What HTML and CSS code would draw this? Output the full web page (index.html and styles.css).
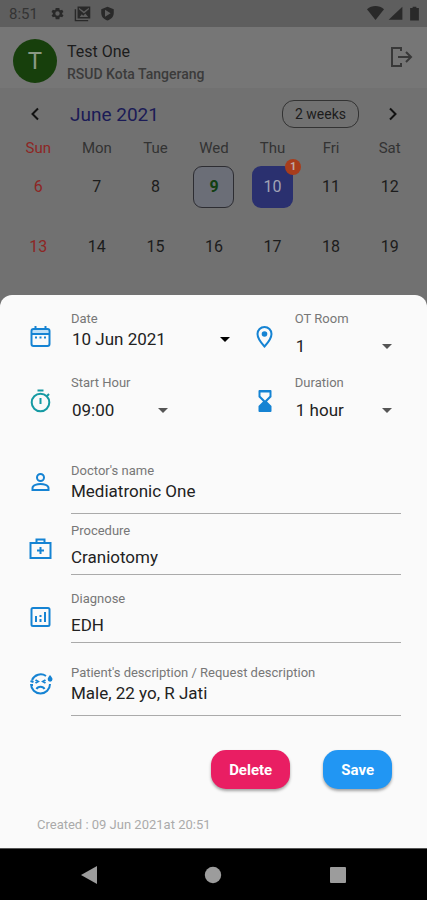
FILE: index.html
```html
<!DOCTYPE html>
<html lang="en">
<head>
	<meta charset="UTF-8">
	<meta name="viewport" content="width=device-width, initial-scale=1">
	<title>OT Schedule</title>
	<link rel="stylesheet" href="styles.css">
</head>
<body>
	<div class="status">
		<span class="clock">8:51</span>
		<svg class="status-icon" viewBox="0 0 24 24"><path fill-rule="evenodd" d="M19.4 13a7.5 7.5 0 0 0 0-2l2.1-1.6-2-3.5-2.5 1a7.5 7.5 0 0 0-1.700-1L15 3H9l-.4 2.900a7.5 7.5 0 0 0-1.700 1l-2.5-1-2 3.5L4.600 11a7.5 7.5 0 0 0 0 2l-2.1 1.6 2 3.5 2.5-1a7.5 7.5 0 0 0 1.700 1L9 21h6l.4-2.900a7.5 7.5 0 0 0 1.700-1l2.5 1 2-3.5zM12 15.5a3.5 3.5 0 1 1 0-7 3.5 3.5 0 0 1 0 7z"/></svg>
		<svg class="status-icon wide" viewBox="0 0 24 24"><path fill-rule="evenodd" d="M1 6h2v15h17v2H1zM5 2h18v17H5zM7 4v2l7 6 7-6V4l-7 5zM8 17h12l-4-5-3 3-2-2z"/></svg>
		<svg class="status-icon" viewBox="0 0 24 24"><path fill-rule="evenodd" d="M12 1l10 4v6c0 6-4 10-10 12C6 21 2 17 2 11V5zM8 6v11l9-5.5z"/></svg>
		<span class="spacer"></span>
		<svg class="status-icon wide" viewBox="0 0 24 24"><path d="M0 6c7-6 17-6 24 0L12 21z"/></svg>
		<svg class="status-icon" viewBox="0 0 24 24"><path d="M1 22L23 1v21z"/></svg>
		<svg class="status-icon" viewBox="0 0 24 24"><path d="M9 1h6v2h4v20H5V3h4z"/></svg>
	</div>
	<header class="profile">
		<div class="avatar">T</div>
		<div class="who">
			<div class="name">Test One</div>
			<div class="hospital">RSUD Kota Tangerang</div>
		</div>
		<button class="icon-btn" type="button" aria-label="Log out">
			<svg width="24" height="24" viewBox="0 0 24 24" class="line"><path d="M12 6V3H3v18h9v-3M9 12h13M17 7l5 5-5 5"/></svg>
		</button>
	</header>
	<section class="calendar">
		<div class="month-bar">
			<button class="icon-btn" type="button" aria-label="Previous">
				<svg width="24" height="24" viewBox="0 0 24 24" class="line"><path d="M15 6.5L9.5 12l5.5 5.5"/></svg>
			</button>
			<h1 class="month">June 2021</h1>
			<button class="range" type="button">2 weeks</button>
			<button class="icon-btn" type="button" aria-label="Next">
				<svg width="24" height="24" viewBox="0 0 24 24" class="line"><path d="M9 6.5l5.5 5.5L9 17.5"/></svg>
			</button>
		</div>
		<table class="days">
			<thead>
				<tr><th class="sunday">Sun</th><th>Mon</th><th>Tue</th><th>Wed</th><th>Thu</th><th>Fri</th><th>Sat</th></tr>
			</thead>
			<tbody>
				<tr>
					<td class="sunday">6</td><td>7</td><td>8</td>
					<td><span class="day today">9</span></td>
					<td><span class="day selected">10<span class="badge">1</span></span></td>
					<td>11</td><td>12</td>
				</tr>
				<tr><td class="sunday">13</td><td>14</td><td>15</td><td>16</td><td>17</td><td>18</td><td>19</td></tr>
			</tbody>
		</table>
	</section>
	<form class="sheet">
		<div class="pair">
			<div class="field">
				<svg class="icon" viewBox="0 0 24 24"><path fill="#bfe0f8" d="M4 4h16v5H4z"/><path class="stroke" d="M5 4h14q2 0 2 2v13q0 2-2 2H5q-2 0-2-2V6q0-2 2-2zM3 9h18M7 1v4M17 1v4"/><path d="M6.500 11.500h2v2h-2zM11 11.500h2v2h-2zM15.500 11.500h2v2h-2z"/></svg>
				<div class="control tight">
					<label for="date">Date</label>
					<div class="drop dark long"><select id="date"><option>10 Jun 2021</option></select></div>
				</div>
			</div>
			<div class="field">
				<svg class="icon" viewBox="0 0 24 24"><path class="stroke" d="M12 2a7 7 0 0 0-7 7c0 5 7 12.5 7 12.5S19 14 19 9a7 7 0 0 0-7-7z"/><circle cx="12" cy="9" r="2.8"/></svg>
				<div class="control">
					<label for="room">OT Room</label>
					<div class="drop"><select id="room"><option>1</option></select></div>
				</div>
			</div>
		</div>
		<div class="pair">
			<div class="field">
				<svg class="icon teal" viewBox="0 0 24 24"><circle class="stroke" cx="12" cy="13.5" r="8.8"/><path class="stroke" d="M9 1.5h6M12 9v6M18.5 7l2-2"/></svg>
				<div class="control">
					<label for="start">Start Hour</label>
					<div class="drop"><select id="start"><option>09:00</option></select></div>
				</div>
			</div>
			<div class="field">
				<svg class="icon" viewBox="0 0 24 24"><path fill-rule="evenodd" d="M7 1h11q1 0 1 1v6l-4.5 4.5L19 17v5q0 1-1 1H7q-1 0-1-1v-5l4.5-4.5L6 8V2q0-1 1-1zM8 3.5V7l4.5 4.5L17 7V3.5z"/></svg>
				<div class="control">
					<label for="duration">Duration</label>
					<div class="drop"><select id="duration"><option>1 hour</option></select></div>
				</div>
			</div>
		</div>
		<div class="field text doctor">
			<svg class="icon high" viewBox="0 0 24 24"><circle class="stroke" cx="12" cy="7.5" r="3.5"/><path class="stroke" d="M4 20v-2c0-3 5-4 8-4s8 1 8 4v2z"/></svg>
			<div class="control tight">
				<label for="doctor">Doctor's name</label>
				<input id="doctor" type="text" value="Mediatronic One">
			</div>
		</div>
		<div class="field text procedure">
			<svg class="icon" viewBox="0 0 24 24"><path class="stroke" d="M2 6h20v15H2zM8 6V2.5h8V6M12 10v7M8.5 13.5h7"/></svg>
			<div class="control">
				<label for="procedure">Procedure</label>
				<input id="procedure" type="text" value="Craniotomy">
			</div>
		</div>
		<div class="field text diagnose">
			<svg class="icon" viewBox="0 0 24 24"><rect class="stroke" x="3" y="3" width="18" height="18" rx="1.5"/><path d="M6.5 11h2v6h-2zM11 10h2v2h-2zM11 14h2v3h-2zM15.5 7h2v10h-2z"/></svg>
			<div class="control">
				<label for="diagnose">Diagnose</label>
				<input id="diagnose" type="text" value="EDH">
			</div>
		</div>
		<div class="field text patient">
			<svg class="icon high" viewBox="0 0 24 24"><path class="stroke" d="M17.5 4A9.5 9.5 0 0 0 3.5 8M2.5 12a9.5 9.5 0 0 0 19 0M2.5 13h2M2 9l3 1M8 17c1.5-3 6.5-3 8 0M7 8l2.5 1.5L7 11M17 8l-2.5 1.5L17 11"/><path d="M21.5 3c1.5 2 2.5 3 2.5 4.3a2.4 2.4 0 0 1-4.8 0C19.2 6 20 5 21.5 3z"/></svg>
			<div class="control tight">
				<label for="patient">Patient's description / Request description</label>
				<input id="patient" type="text" value="Male, 22 yo, R Jati">
			</div>
		</div>
		<div class="actions">
			<button class="btn delete" type="button">Delete</button>
			<button class="btn save" type="button">Save</button>
		</div>
		<p class="created">Created : 09 Jun 2021at 20:51</p>
	</form>
	<nav class="system-nav">
		<button type="button" aria-label="Back"><svg width="18" height="18" viewBox="0 0 18 18"><path d="M1 9L17 0v18z"/></svg></button>
		<button type="button" aria-label="Home"><svg width="18" height="18" viewBox="0 0 18 18"><circle cx="9" cy="9" r="8.2"/></svg></button>
		<button type="button" aria-label="Recent apps"><svg width="18" height="18" viewBox="0 0 18 18"><rect x="1" y="1" width="16" height="16" rx="1"/></svg></button>
	</nav>
</body>
</html>
```

FILE: styles.css
```css
* {
	box-sizing: border-box;
}
body {
	margin: 0;
	min-height: 100vh;
	display: flex;
	flex-direction: column;
	background-color: #717171;
	font-family: Roboto, "Liberation Sans", sans-serif;
	color: #1c1c1c;
}
button {
	padding: 0;
	border: 0;
	background: none;
	font-family: inherit;
	color: inherit;
}
svg {
	display: block;
}

/* status bar */
.status {
	height: 27px;
	padding: 0 5px 0 9px;
	display: flex;
	align-items: center;
	gap: 4px;
	background-color: #5e5e5e;
	color: #343434;
}
.clock {
	margin-right: 8px;
	font-size: 15px;
}
.status-icon {
	width: 15px;
	height: 15px;
	margin-right: 5px;
	fill: #292929;
}
.status-icon.wide {
	width: 17px;
	height: 17px;
}
.spacer {
	flex: 1;
}
.spacer ~ .status-icon {
	margin-right: 0;
}

/* profile */
.profile {
	height: 61px;
	padding: 12px 14px 5px 13px;
	display: flex;
	align-items: center;
	background-color: #767676;
}
.avatar {
	width: 44px;
	height: 44px;
	border-radius: 50%;
	background-color: #173f0c;
	color: #8b9985;
	font-size: 24px;
	line-height: 44px;
	text-align: center;
}
.who {
	flex: 1;
	margin: 3px 0 0 10px;
}
.name {
	font-size: 16px;
	line-height: 22px;
}
.hospital {
	font-size: 14px;
	line-height: 22px;
	font-weight: 500;
	color: #3b3b3b;
}
.line {
	fill: none;
	stroke: currentColor;
	stroke-width: 2;
}
.profile .icon-btn {
	margin-bottom: 8px;
	color: #383838;
}

/* calendar */
.calendar {
	padding: 10px 8px 27px 9px;
}
.month-bar {
	height: 32px;
	margin-bottom: 4px;
	padding: 0 14px;
	display: flex;
	align-items: center;
}
.month-bar .icon-btn {
	color: #111;
}
.month {
	flex: 1;
	margin: 0 0 0 23px;
	font-size: 19px;
	font-weight: 400;
	color: #1b1b56;
}
.range {
	width: 77px;
	height: 28px;
	margin-right: 22px;
	border: 1px solid #333;
	border-radius: 12px;
	font-size: 14px;
}
.days {
	width: 100%;
	table-layout: fixed;
	border-collapse: collapse;
	text-align: center;
	font-size: 16px;
}
.days th {
	height: 27px;
	padding: 0;
	font-size: 15px;
	font-weight: 400;
	color: #333;
}
.days td {
	height: 44px;
	padding: 0;
}
.days tbody tr:first-child td {
	height: 63px;
	padding-bottom: 12px;
}
.days .sunday {
	color: #8d2624;
}
.day {
	position: relative;
	display: block;
	width: 41px;
	height: 42px;
	margin: 0 auto;
	border-radius: 9px;
	line-height: 42px;
}
.today {
	border: 1px solid #2d2d32;
	background-color: #6b6e77;
	color: #123f12;
	font-weight: 700;
	line-height: 40px;
}
.selected {
	background-color: #2a306f;
	color: #a1a3b5;
}
.badge {
	position: absolute;
	top: -7px;
	right: -8px;
	width: 16px;
	height: 16px;
	border-radius: 50%;
	background-color: #a83d1c;
	color: #c0aaa4;
	font-size: 11px;
	font-weight: 700;
	line-height: 16px;
}

/* bottom sheet */
.sheet {
	flex: 1;
	padding: 16px 26px 12px 28px;
	border-radius: 12px 12px 0 0;
	background-color: #fafafa;
}
.pair {
	display: grid;
	grid-template-columns: 3fr 2fr;
	margin-bottom: 18px;
}
.field {
	display: grid;
	grid-template-columns: 25px 1fr;
	column-gap: 18px;
}
.icon {
	width: 25px;
	height: 24px;
	margin-top: 14px;
	fill: #1583d3;
	stroke: none;
	color: #1583d3;
}
.icon.high {
	margin-top: 7px;
}
.icon.teal {
	color: #159aa3;
}
.stroke {
	fill: none;
	stroke: currentColor;
	stroke-width: 2;
}
.control {
	display: flex;
	flex-direction: column;
	gap: 8px;
}
.control.tight {
	gap: 1px;
}
label {
	font-size: 13px;
	line-height: 16px;
	color: #777;
}
.drop {
	position: relative;
	width: 98px;
}
.drop.long {
	width: 160px;
}
/* caret */
.drop::after {
	content: "";
	position: absolute;
	top: 9px;
	right: 1px;
	border: 5px solid transparent;
	border-top-color: #555;
	border-bottom: 0;
	pointer-events: none;
}
.drop.dark::after {
	border-top-color: #000;
}
select,
input {
	display: block;
	width: 100%;
	height: 22px;
	margin: 0;
	padding: 0;
	border: 0;
	border-radius: 0;
	background: none;
	appearance: none;
	outline: 0;
	font-family: inherit;
	font-size: 17px;
	line-height: 22px;
	color: #222;
}
select {
	padding-left: 1px;
}
.text input {
	height: 29px;
	padding-bottom: 6px;
	border-bottom: 1px solid #aaa;
}
.text .tight input {
	height: 34px;
	padding-bottom: 11px;
}
.doctor {
	margin-top: 42px;
}
.procedure {
	margin-top: 9px;
}
.procedure .control,
.diagnose .control {
	gap: 7px;
}
.diagnose {
	margin-top: 16px;
}
.patient {
	margin-top: 22px;
}
.actions {
	display: flex;
	justify-content: flex-end;
	gap: 33px;
	margin: 34px 9px 0 0;
}
.btn {
	height: 39px;
	padding: 0 18px;
	border-radius: 15px;
	box-shadow: 0 2px 3px rgba(0,0,0,0.35);
	color: #fff;
	font-size: 15px;
	font-weight: 700;
}
.delete {
	background-color: #e91e63;
}
.save {
	background-color: #2196f3;
}
.created {
	margin: 28px 0 0 9px;
	font-size: 13px;
	line-height: 16px;
	color: #aaa;
}

/* android navigation */
.system-nav {
	height: 52px;
	padding: 0 27px;
	display: flex;
	align-items: center;
	justify-content: space-around;
	border-top: 1px solid #555;
	background-color: #000;
}
.system-nav svg {
	fill: #9c9c9c;
}
```
